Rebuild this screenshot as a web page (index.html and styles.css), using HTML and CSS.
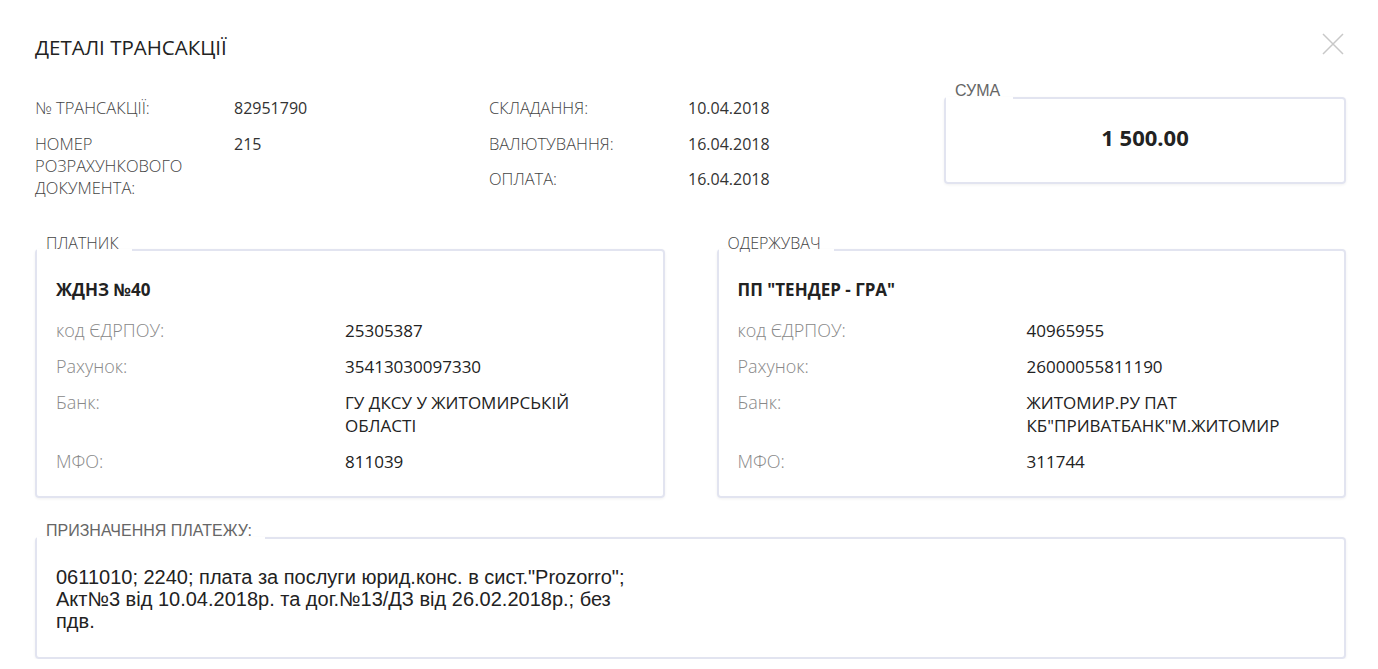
FILE: index.html
```html
<!DOCTYPE html>
<html lang="uk">
<head>
    <meta charset="UTF-8">
    <meta name="viewport" content="width=device-width, initial-scale=1.0">
    <title>Деталі трансакції</title>
    <link rel="stylesheet" href="styles.css">
</head>
<body>
    <div class="modal">
        <div class="modal-header">
            <h1>ДЕТАЛІ ТРАНСАКЦІЇ</h1>
            <button class="close" aria-label="Закрити">
                <svg width="22" height="22" viewBox="0 0 22 22">
                    <path d="M1 1 L21 21 M21 1 L1 21" stroke="#c8c8c8" stroke-width="1.5" fill="none"/>
                </svg>
            </button>
        </div>

        <div class="summary">
            <div class="info-list">
                <div class="info-row">
                    <span class="info-label">№ ТРАНСАКЦІЇ:</span>
                    <span class="info-value">82951790</span>
                </div>
                <div class="info-row">
                    <span class="info-label">НОМЕР РОЗРАХУНКОВОГО ДОКУМЕНТА:</span>
                    <span class="info-value">215</span>
                </div>
            </div>

            <div class="info-list">
                <div class="info-row">
                    <span class="info-label">СКЛАДАННЯ:</span>
                    <span class="info-value">10.04.2018</span>
                </div>
                <div class="info-row">
                    <span class="info-label">ВАЛЮТУВАННЯ:</span>
                    <span class="info-value">16.04.2018</span>
                </div>
                <div class="info-row">
                    <span class="info-label">ОПЛАТА:</span>
                    <span class="info-value">16.04.2018</span>
                </div>
            </div>

            <fieldset class="box sum-box">
                <legend class="legend-arial">СУМА</legend>
                <div class="amount">1 500.00</div>
            </fieldset>
        </div>

        <div class="parties">
            <fieldset class="box">
                <legend>ПЛАТНИК</legend>
                <div class="party">
                    <div class="party-name">ЖДНЗ №40</div>
                    <div class="party-row">
                        <span class="party-label">код ЄДРПОУ:</span>
                        <span class="party-value">25305387</span>
                    </div>
                    <div class="party-row">
                        <span class="party-label">Рахунок:</span>
                        <span class="party-value">35413030097330</span>
                    </div>
                    <div class="party-row">
                        <span class="party-label">Банк:</span>
                        <span class="party-value">ГУ ДКСУ У ЖИТОМИРСЬКІЙ ОБЛАСТІ</span>
                    </div>
                    <div class="party-row">
                        <span class="party-label">МФО:</span>
                        <span class="party-value">811039</span>
                    </div>
                </div>
            </fieldset>

            <fieldset class="box">
                <legend>ОДЕРЖУВАЧ</legend>
                <div class="party">
                    <div class="party-name">ПП "ТЕНДЕР - ГРА"</div>
                    <div class="party-row">
                        <span class="party-label">код ЄДРПОУ:</span>
                        <span class="party-value">40965955</span>
                    </div>
                    <div class="party-row">
                        <span class="party-label">Рахунок:</span>
                        <span class="party-value">26000055811190</span>
                    </div>
                    <div class="party-row">
                        <span class="party-label">Банк:</span>
                        <span class="party-value">ЖИТОМИР.РУ ПАТ КБ"ПРИВАТБАНК"М.ЖИТОМИР</span>
                    </div>
                    <div class="party-row">
                        <span class="party-label">МФО:</span>
                        <span class="party-value">311744</span>
                    </div>
                </div>
            </fieldset>
        </div>

        <fieldset class="box purpose">
            <legend class="legend-arial">ПРИЗНАЧЕННЯ ПЛАТЕЖУ:</legend>
            <p>0611010; 2240; плата за послуги юрид.конс. в сист."Prozorro"; Акт№3 від 10.04.2018р. та дог.№13/ДЗ від 26.02.2018р.; без пдв.</p>
        </fieldset>
    </div>
</body>
</html>
```

FILE: styles.css
```css
body {
    margin: 0;
    background-color: #fff;
    font-family: "Open Sans", Arial, sans-serif;
    color: #333;
}
.modal {
    padding: 30px 32px 0 35px;
}
.modal-header {
    display: flex;
    justify-content: space-between;
    align-items: center;
    height: 34px;
}
h1 {
    margin: 0;
    font-size: 20.5px;
    font-weight: 400;
    color: #222;
}
.close {
    background: none;
    border: none;
    padding: 0;
    margin: -6px 2px 0 0;
    cursor: pointer;
    display: flex;
}

/* top block */
.summary {
    display: grid;
    grid-template-columns: 454px 455px 1fr;
    margin-top: 33px;
}
.info-row {
    display: grid;
    grid-template-columns: 199px 1fr;
    font-size: 16px;
    line-height: 22px;
    margin-bottom: 13.5px;
}
.info-label {
    font-size: 16.5px;
    font-weight: 300;
    color: #444;
    padding-right: 20px;
}
.info-value {
    color: #333;
}

/* boxes */
.box {
    margin: 0;
    padding: 0;
    border: 2px solid #e2e4f0;
    border-radius: 4px;
    box-shadow: 0 1px 3px rgba(0, 0, 0, 0.06);
    min-width: 0;
}
.box legend {
    padding: 0 13px 14px 9px;
    font-size: 16px;
    line-height: 14px;
    font-weight: 300;
    color: #444;
}
.box .legend-arial {
    font-family: "Liberation Sans", Arial, sans-serif;
    font-weight: 400;
    color: #666;
}
.sum-box {
    margin-top: -13px;
    height: 100px;
    box-sizing: border-box;
}
.amount {
    text-align: center;
    font-size: 22px;
    font-weight: 700;
    color: #222;
    padding-top: 10px;
}

/* payer / receiver */
.parties {
    display: grid;
    grid-template-columns: 1fr 1fr;
    gap: 52px;
    margin-top: 24px;
}
.party {
    padding: 14px 19px 23px 19px;
}
.party-name {
    font-size: 17px;
    font-weight: 700;
    line-height: 23px;
    color: #222;
    margin-bottom: 18px;
}
.party-row {
    display: grid;
    grid-template-columns: 289px 1fr;
    font-size: 17px;
    line-height: 23px;
    margin-bottom: 13px;
}
.party-row:last-child {
    margin-bottom: 0;
}
.party-label {
    font-weight: 300;
    font-size: 18px;
    color: #888;
}
.party-value {
    color: #222;
}

/* purpose */
.purpose {
    margin-top: 26px;
    padding: 14px 19px 25px 19px;
}
.purpose legend {
    margin-left: -19px;
}
.purpose p {
    margin: 0;
    max-width: 585px;
    font-family: "Liberation Sans", Arial, sans-serif;
    font-size: 20px;
    line-height: 22px;
    color: #222;
}
```
